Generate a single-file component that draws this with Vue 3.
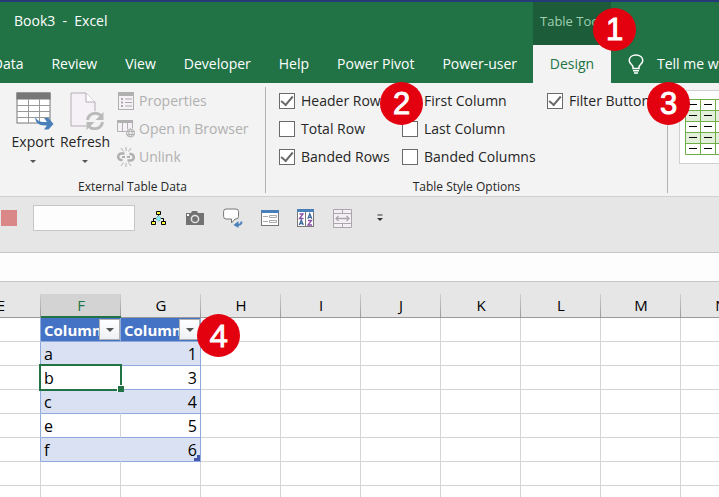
<template>
  <div class="app">
    <header class="top">
      <div class="main-col">
        <div class="title">Book3&nbsp; -&nbsp; Excel</div>
        <nav class="tabs">
          <a v-for="tab in tabs" :key="tab" href="#" class="tab">{{ tab }}</a>
        </nav>
      </div>
      <div class="context-col">
        <div class="context-title">Table Tools</div>
        <a href="#" class="tab active">Design</a>
        <span class="badge badge-1">1</span>
      </div>
      <a href="#" class="tell-me">
        <svg width="16" height="20" viewBox="0 0 16 20" fill="none" stroke="#fff" stroke-width="1.5">
          <path d="M5 14.500V13C5 11 1.200 9.800 1.200 6.600C1.200 3.200 4.200 1 8 1s6.800 2.200 6.800 5.600C14.800 9.800 11 11 11 13v1.500z" />
          <path d="M5 16.800h6M6 19h4" />
        </svg>
        <span>Tell me what you want to do</span>
      </a>
    </header>

    <section class="ribbon">
      <div class="group external">
        <div class="group-body">
          <button type="button" class="big">
            <svg width="38" height="38" viewBox="0 0 38 38">
              <rect x="1" y="1" width="33" height="30" fill="#fff" stroke="#777" />
              <rect x="0.500" y="0.500" width="34" height="7" fill="#777" />
              <path d="M1 13.500h33M1 19.500h33M1 25.500h33M12.500 7v24M23.500 7v24" stroke="#999" fill="none" />
              <path d="M19.500 24.500c1 4 4 5.500 9.500 5.500h2l-3-4h4.500l5 6-5 5.500h-4.500l3-4h-2c-6 0-10.500-3-9.500-9z" fill="#4a80ba" />
            </svg>
            <span>Export</span>
            <i class="arrow"></i>
          </button>
          <button type="button" class="big">
            <svg width="34" height="38" viewBox="0 0 34 38">
              <path d="M1 1h15l9 9v24H1z" fill="#f6f1f7" stroke="#b3acb4" />
              <path d="M16 1v9h9" fill="#fff" stroke="#b3acb4" />
              <circle cx="25" cy="29" r="10" fill="#f3f3f3" />
              <path d="M17.500 28a8 8 0 0 1 13.500-4.500M32.500 30a8 8 0 0 1-13.500 4.500" fill="none" stroke="#bababa" stroke-width="3" />
              <path d="M33.500 20v8h-8zM16.500 38v-8h8z" fill="#bababa" />
            </svg>
            <span>Refresh</span>
            <i class="arrow"></i>
          </button>
          <div class="small-list">
            <button type="button" class="small" disabled>
              <svg width="18" height="18" viewBox="0 0 18 18">
                <rect x="1.500" y="0.500" width="15" height="17" fill="#f6f1f7" stroke="#b0b0b0" />
                <rect x="1" y="0" width="16" height="4" fill="#b0b0b0" />
                <path d="M8 7h7M8 10.500h7M8 14h7" stroke="#a9a9a9" />
                <path d="M4 7h2M4 10.500h2M4 14h2" stroke="#a9a9a9" stroke-width="2" />
              </svg>
              Properties
            </button>
            <button type="button" class="small" disabled>
              <svg width="18" height="18" viewBox="0 0 18 18" fill="none" stroke="#b0b0b0">
                <path d="M0.500 0.500h15v11H0.500zM5.500 1v10M10.500 1v10" fill="#f6f1f7" />
                <path d="M0 1.500h16" stroke-width="3" />
                <circle cx="13.500" cy="13" r="5" fill="#f3f3f3" stroke="none" />
                <circle cx="13.500" cy="13" r="4" />
                <ellipse cx="13.500" cy="13" rx="1.700" ry="4" />
                <path d="M9.500 11.500h8M9.500 14.500h8" />
              </svg>
              Open in Browser
            </button>
            <button type="button" class="small" disabled>
              <svg width="18" height="20" viewBox="0 0 18 20" fill="none" stroke="#b0b0b0">
                <path d="M7.500 6.500H4.500a3.300 3.300 0 0 0 0 6.600h1M10.500 13.500h3a3.300 3.300 0 0 0 0-6.600h-1" stroke-width="2.500" />
                <path d="M5 10h3M10 10h3" stroke-width="2" />
                <path d="M9 0v4M4 1l2.500 3.500M14 1l-2.500 3.500M9 16v4M4 19l2.500-3.500M14 19l-2.500-3.500" />
              </svg>
              Unlink
            </button>
          </div>
        </div>
        <div class="group-title">External Table Data</div>
      </div>

      <div class="group options">
        <div class="checks">
          <label v-for="opt in options" :key="opt.label" class="check">
            <input v-model="opt.checked" type="checkbox">
            {{ opt.label }}
          </label>
        </div>
        <div class="group-title">Table Style Options</div>
        <span class="badge badge-2">2</span>
        <span class="badge badge-3">3</span>
      </div>

      <div class="gallery">
        <button type="button" class="style-item" aria-label="Table style">
          <svg width="76" height="56" viewBox="0 0 76 56">
            <rect x="0.500" y="0.500" width="75" height="55" fill="#fff" />
            <path d="M0 11.500h76v11H0zM0 33.500h76v11H0z" fill="#e2efda" />
            <path d="M0.500 0.500h75v55H0.500zM0 11.500h76M0 22.500h76M0 33.500h76M0 44.500h76M15.500 0v56M30.500 0v56M45.500 0v56M60.500 0v56" fill="none" stroke="#70ad47" />
            <path d="M4 5.500h68M4 16.500h68M4 27.500h68M4 38.500h68M4 49.500h68" stroke="#000" stroke-dasharray="8 7" />
          </svg>
        </button>
      </div>
    </section>

    <div class="quick">
      <button type="button" class="stop" aria-label="Stop"></button>
      <input type="text" class="quick-input" aria-label="Value">
      <div class="quick-icons">
        <button type="button" aria-label="Hierarchy">
          <svg width="16" height="16" viewBox="0 0 16 16">
            <path d="M2.500 11V8.500h3M12.500 11V8.500h-3M7.500 4v2" fill="none" stroke="#000" />
            <path d="M7.500 5.500l2.500 3-2.500 3-2.500-3z" fill="#8ef0f4" stroke="#3c8f96" stroke-dasharray="1 1" />
            <path d="M5.500 1.500h4v3h-4zM0.500 11.500h4v3h-4zM10.500 11.500h4v3h-4z" fill="#ffff3c" stroke="#000" />
          </svg>
        </button>
        <button type="button" aria-label="Camera">
          <svg width="20" height="16" viewBox="0 0 20 16">
            <path d="M1 3h5l1-2h5l1 2h6v12H1z" fill="#727272" />
            <circle cx="10" cy="9" r="3.600" fill="none" stroke="#e6e6e6" stroke-width="1.500" />
            <path d="M2 5h2" stroke="#fff" stroke-width="2" />
          </svg>
        </button>
        <button type="button" aria-label="Comment">
          <svg width="20" height="20" viewBox="0 0 20 20">
            <path d="M3 1h10q2.500 0 2.500 2.500v5q0 2.500-2.500 2.500h-1l-3.500 4v-4H3Q0.600 11 0.600 8.500v-5Q0.600 1 3 1z" fill="#fff" stroke="#777" />
            <path d="M18.500 13.500c0 3-1.500 3.500-5 3.500" fill="none" stroke="#4a80ba" stroke-width="2" />
            <path d="M15.500 13v7L10.500 17z" fill="#4a80ba" />
          </svg>
        </button>
        <button type="button" aria-label="Form">
          <svg width="18" height="16" viewBox="0 0 18 16">
            <rect x="0.500" y="0.500" width="17" height="15" fill="#fff" stroke="#777" />
            <rect width="18" height="3" fill="#4a80ba" />
            <path d="M2 6.500h5M2 11.500h5M8.500 5.500h7v2h-7zM8.500 10.500h7v2h-7z" fill="none" stroke="#aaa" />
          </svg>
        </button>
        <button type="button" aria-label="Sort">
          <svg width="18" height="18" viewBox="0 0 18 18" fill="none">
            <rect x="0.500" y="0.500" width="16" height="17" fill="#fff" stroke="#777" />
            <rect width="17" height="3" fill="#4a80ba" />
            <path d="M8.500 3v15" stroke="#777" />
            <path d="M2.500 5h3.500l-3.500 4.500h4M11 11.500h3.500L11 16h4" stroke="#8a4fa8" stroke-width="1.300" />
            <path d="M2.300 16l2-5 2 5M3 14.500h2.700M10.800 9.800l2-5 2 5M11.500 8.300h2.700" stroke="#40699c" stroke-width="1.300" />
          </svg>
        </button>
        <button type="button" aria-label="Merge">
          <svg width="20" height="19" viewBox="0 0 20 19" fill="none" stroke="#aaa6ab">
            <path d="M0.500 0.500h18v18H0.500zM0.500 4.500h18M0.500 14.500h18M9.500 0v4M9.500 15v4" fill="#f4eff5" />
            <path d="M3 9.500h13M5.500 7L3 9.500 5.500 12M13.500 7L16 9.500 13.500 12" stroke-width="1.300" />
          </svg>
        </button>
        <button type="button" aria-label="More">
          <svg width="6" height="8" viewBox="0 0 6 8">
            <path d="M0.500 1h5" stroke="#333" />
            <path d="M0 4h6L3 7z" fill="#333" />
          </svg>
        </button>
      </div>
    </div>

    <div class="formula"></div>

    <div class="sheet">
      <table class="grid">
        <thead>
          <tr>
            <th v-for="c in cols" :key="c" :class="{ current: c === 'F' }">{{ c }}</th>
          </tr>
        </thead>
        <tbody>
          <tr class="list-head">
            <td class="before"></td>
            <td v-for="n in 2" :key="n" class="head">
              <div class="head-cell">
                <span>Column{{ n }}</span>
                <button type="button" class="filter" :aria-label="'Filter ' + n"><i class="arrow"></i></button>
              </div>
            </td>
            <td class="after"><span class="badge badge-4">4</span></td>
            <td v-for="n in 6" :key="'x' + n"></td>
          </tr>
          <tr v-for="(row, i) in rows" :key="row.name" :class="['list-row', { band: i % 2 === 0 }]">
            <td class="before"></td>
            <td class="name">
              {{ row.name }}
              <span v-if="row.name === 'b'" class="selection"></span>
            </td>
            <td class="num">
              {{ row.value }}
              <span v-if="i === rows.length - 1" class="corner"></span>
            </td>
            <td v-for="n in 7" :key="n"></td>
          </tr>
          <tr v-for="n in 2" :key="'e' + n">
            <td v-for="c in cols" :key="c"></td>
          </tr>
        </tbody>
      </table>
    </div>
  </div>
</template>

<script setup>
import { ref } from 'vue'

const tabs = ['Data', 'Review', 'View', 'Developer', 'Help', 'Power Pivot', 'Power-user']

const options = ref([
  { label: 'Header Row', checked: true },
  { label: 'First Column', checked: false },
  { label: 'Filter Button', checked: true },
  { label: 'Total Row', checked: false },
  { label: 'Last Column', checked: false },
  { label: 'Banded Rows', checked: true },
  { label: 'Banded Columns', checked: false }
])

const cols = ['E', 'F', 'G', 'H', 'I', 'J', 'K', 'L', 'M', 'N']

const rows = [
  { name: 'a', value: 1 },
  { name: 'b', value: 3 },
  { name: 'c', value: 4 },
  { name: 'e', value: 5 },
  { name: 'f', value: 6 }
]
</script>

<style>
body {
  margin: 0;
  overflow: hidden;
}
</style>

<style scoped>
* {
  box-sizing: border-box;
}

.app {
  height: 100vh;
  overflow: hidden;
  display: flex;
  flex-direction: column;
  background: #e6e6e6;
  color: #262626;
  font-family: "Segoe UI", "Open Sans", "Noto Sans", sans-serif;
  font-size: 14px;
  line-height: 20px;
}

button {
  padding: 0;
  border: 0;
  background: none;
  color: inherit;
  font: inherit;
}

a {
  color: #fff;
  text-decoration: none;
}

svg {
  display: block;
  flex: none;
}

/* title and tabs */
.top {
  display: flex;
  flex: none;
  background: #217346;
  border-top: 2px solid #253a78;
  white-space: nowrap;
}

.main-col {
  width: 533px;
  flex: none;
}

.title {
  height: 43px;
  padding: 9px 14px;
  color: #fff;
}

.tabs {
  display: flex;
  justify-content: flex-end;
  padding-right: 2px;
}

.tab {
  padding: 9px 14px;
}

.context-col {
  position: relative;
  width: 78px;
  flex: none;
}

.context-title {
  height: 43px;
  padding: 9px 7px;
  overflow: hidden;
  background: #1c5c38;
  color: #9fd0b0;
  font-size: 13px;
}

.tab.active {
  display: block;
  padding: 9px 0;
  background: #f3f3f3;
  color: #217346;
  text-align: center;
}

.tell-me {
  display: flex;
  align-items: center;
  align-self: flex-end;
  gap: 13px;
  height: 38px;
  padding-left: 17px;
  overflow: hidden;
}

/* ribbon */
.ribbon {
  display: flex;
  flex: none;
  height: 114px;
  padding: 4px 0 3px;
  background: #f3f3f3;
  border-bottom: 1px solid #d0d0d0;
  white-space: nowrap;
}

.group {
  position: relative;
  display: flex;
  flex: none;
  flex-direction: column;
  justify-content: space-between;
  border-right: 1px solid #b4b4b4;
}

.external {
  width: 266px;
}

.options {
  width: 402px;
}

.group-title {
  font-size: 12px;
  line-height: 12px;
  text-align: center;
}

.group-body {
  display: flex;
  padding: 5px 0 0 7px;
}

.big {
  display: flex;
  flex-direction: column;
  align-items: center;
  width: 52px;
}

.big svg {
  margin-left: 4px;
}

.big span {
  margin-top: 2px;
}

.arrow {
  width: 0;
  border: 3px solid transparent;
  border-top-color: #555;
  border-bottom: 0;
}

.big .arrow {
  margin-top: 8px;
}

.small-list {
  display: flex;
  flex-direction: column;
  margin-top: -5px;
  padding-left: 6px;
}

.small {
  display: flex;
  align-items: center;
  gap: 4px;
  height: 28px;
  color: #b0b0b0;
}

.checks {
  display: grid;
  grid-template-columns: 123px 145px 1fr;
  grid-auto-rows: 28px;
  padding-left: 13px;
}

.check {
  display: flex;
  align-items: center;
  gap: 6px;
}

.check:nth-child(n + 6) {
  grid-row: 3;
}

.check:nth-child(4) {
  grid-column: 1;
}

.check:nth-child(4),
.check:nth-child(5) {
  grid-row: 2;
}

.check input {
  appearance: none;
  display: flex;
  align-items: center;
  justify-content: center;
  width: 16px;
  height: 16px;
  margin: 0;
  background: #fff;
  border: 1px solid #6a6a6a;
}

.check input:checked::before {
  content: "";
  width: 10px;
  height: 5px;
  margin-top: -3px;
  border: solid #6a6a6a;
  border-width: 0 0 2px 2px;
  transform: rotate(-50deg);
}

.gallery {
  flex: 1;
  min-width: 0;
  overflow: hidden;
  padding: 3px 0 0 11px;
}

.style-item {
  padding: 8px 5px;
  background: #fff;
  border: 1px solid #d0d0d0;
}

/* quick access bar */
.quick {
  display: flex;
  flex: none;
  align-items: center;
  height: 56px;
  padding-bottom: 13px;
  border-bottom: 1px solid #c6c6c6;
}

.stop {
  width: 16px;
  height: 16px;
  margin: 0 16px 0 1px;
  background: #da8788;
}

.quick-input {
  width: 102px;
  height: 26px;
  border: 1px solid #c6c6c6;
  background: #fdfdfd;
}

.quick-icons {
  display: flex;
  align-items: center;
  gap: 18px;
  padding-left: 16px;
}

.quick-icons button:last-child {
  padding-left: 6px;
}

.formula {
  flex: none;
  height: 29px;
  background: #fdfdfd;
  border-bottom: 1px solid #c6c6c6;
}

/* worksheet */
.sheet {
  flex: 1;
  min-height: 0;
  overflow: hidden;
  padding-top: 12px;
}

.grid {
  width: 800px;
  margin-left: -39px;
  table-layout: fixed;
  border-spacing: 0;
  color: #000;
  font-size: 16px;
  line-height: 22px;
}

.grid th {
  height: 24px;
  padding: 0 0 1px;
  border-bottom: 1px solid #999;
  background: linear-gradient(#d0d0d0, #999) right / 1px 100% no-repeat;
  font-size: 15px;
  font-weight: 400;
}

.grid th.current {
  padding: 0;
  border-bottom: 2px solid #217346;
  background-color: #d3d3d3;
  color: #217346;
}

.grid td {
  position: relative;
  height: 24px;
  padding: 0 3px;
  background: #fff;
  border-right: 1px solid #d4d4d4;
  border-bottom: 1px solid #d4d4d4;
}

.grid td.before {
  border-right-color: #8ea9db;
}

.grid td.head {
  padding: 0 0 0 3px;
  background: #4472c4;
  border-color: #8ea9db;
  color: #fff;
  font-size: 15px;
  font-weight: 700;
}

.head-cell {
  display: flex;
  align-items: center;
}

.head-cell span {
  flex: 1;
  min-width: 0;
  overflow: hidden;
}

.filter {
  display: flex;
  flex: none;
  align-items: center;
  justify-content: center;
  width: 21px;
  height: 21px;
  background: linear-gradient(#fff, #eef0f4);
  border: 1px solid #b0b0b0;
}

.filter .arrow {
  border-width: 4px 4px 0;
}

.grid td.name,
.grid td.num {
  border-bottom-color: #8ea9db;
}

.grid td.num {
  border-right-color: #8ea9db;
  text-align: right;
}

.band td.name,
.band td.num {
  background: #d9e1f2;
}

.grid .band td.name {
  border-right-color: #d9e1f2;
}

.selection {
  position: absolute;
  z-index: 1;
  inset: -2px;
  border: 2px solid #217346;
}

.selection::after {
  content: "";
  position: absolute;
  right: -4px;
  bottom: -3px;
  width: 6px;
  height: 6px;
  background: #217346;
  border: solid #fff;
  border-width: 1px 0 0 1px;
}

.corner {
  position: absolute;
  right: 0;
  bottom: 0;
  width: 6px;
  height: 6px;
  border: solid #4558b0;
  border-width: 0 3px 3px 0;
}

/* numbered markers */
.badge {
  position: absolute;
  z-index: 2;
  width: 43px;
  height: 43px;
  border-radius: 50%;
  background: #e3000f;
  color: #fff;
  font-family: "Liberation Sans", Arial, sans-serif;
  font-size: 31px;
  line-height: 43px;
  text-align: center;
  -webkit-text-stroke: 1px #fff;
}

.badge-1 {
  top: 6px;
  left: 60px;
}

.badge-2 {
  top: -5px;
  left: 114px;
}

.badge-3 {
  top: -5px;
  right: -23px;
}

.badge-4 {
  top: -4px;
  left: -4px;
  font-family: "Segoe UI", "Open Sans", sans-serif;
}
</style>
